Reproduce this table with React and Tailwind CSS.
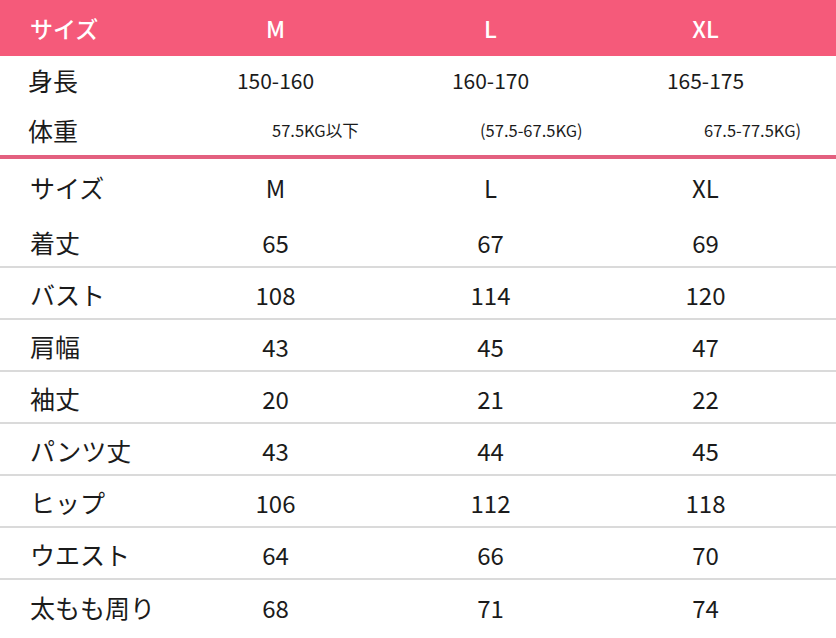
const FONT = "font-['Noto_Sans_CJK_JP','Noto_Sans',sans-serif]"

const TOP = [
  { label: '身長', values: ['150-160', '160-170', '165-175'] },
  { label: '体重', values: ['57.5KG以下', '(57.5-67.5KG)', '67.5-77.5KG)'] },
]

const WEIGHT_PAD = ['pl-[104px]', 'pl-[97px]', 'pl-[106px]']

const ROWS = [
  ['着丈', '65', '67', '69'],
  ['バスト', '108', '114', '120'],
  ['肩幅', '43', '45', '47'],
  ['袖丈', '20', '21', '22'],
  ['パンツ丈', '43', '44', '45'],
  ['ヒップ', '106', '112', '118'],
  ['ウエスト', '64', '66', '70'],
  ['太もも周り', '68', '71', '74'],
]

const GRID = 'grid grid-cols-[168px_215px_215px_215px] items-center'

export default function App() {
  return (
    <div className={`w-[836px] h-[638px] bg-white text-[#1b1b1b] overflow-hidden ${FONT}`}>
      <div className={`${GRID} h-[56px] bg-[#f55a7a] text-white text-[23px] font-medium`}>
        <span className="pl-[30px]">サイズ</span>
        <span className="text-center">M</span>
        <span className="text-center">L</span>
        <span className="text-center">XL</span>
      </div>

      {TOP.map((row, i) => (
        <div key={row.label} className={`${GRID} h-[49.5px]`}>
          <span className="pl-[28px] text-[25px]">{row.label}</span>
          {row.values.map((v, j) =>
            i === 0 ? (
              <span key={j} className="text-center text-[21px]">
                {v}
              </span>
            ) : (
              <span key={j} className={`text-[16.5px] whitespace-nowrap ${WEIGHT_PAD[j]}`}>
                {v}
              </span>
            )
          )}
        </div>
      ))}

      <div className="h-[4px] bg-[#e3607f]" />

      <div className={`${GRID} h-[57px] text-[24px]`}>
        <span className="pl-[30px] text-[25px]">サイズ</span>
        <span className="text-center">M</span>
        <span className="text-center">L</span>
        <span className="text-center">XL</span>
      </div>

      {ROWS.map(([label, ...vals], i) => (
        <div
          key={label}
          className={`${GRID} h-[52px] pt-[3px] ${i < ROWS.length - 1 ? 'border-b-2 border-[#dadada]' : ''}`}
        >
          <span className="pl-[30px] text-[25px]">{label}</span>
          {vals.map((v, j) => (
            <span key={j} className="text-center text-[24px]">
              {v}
            </span>
          ))}
        </div>
      ))}
    </div>
  )
}
